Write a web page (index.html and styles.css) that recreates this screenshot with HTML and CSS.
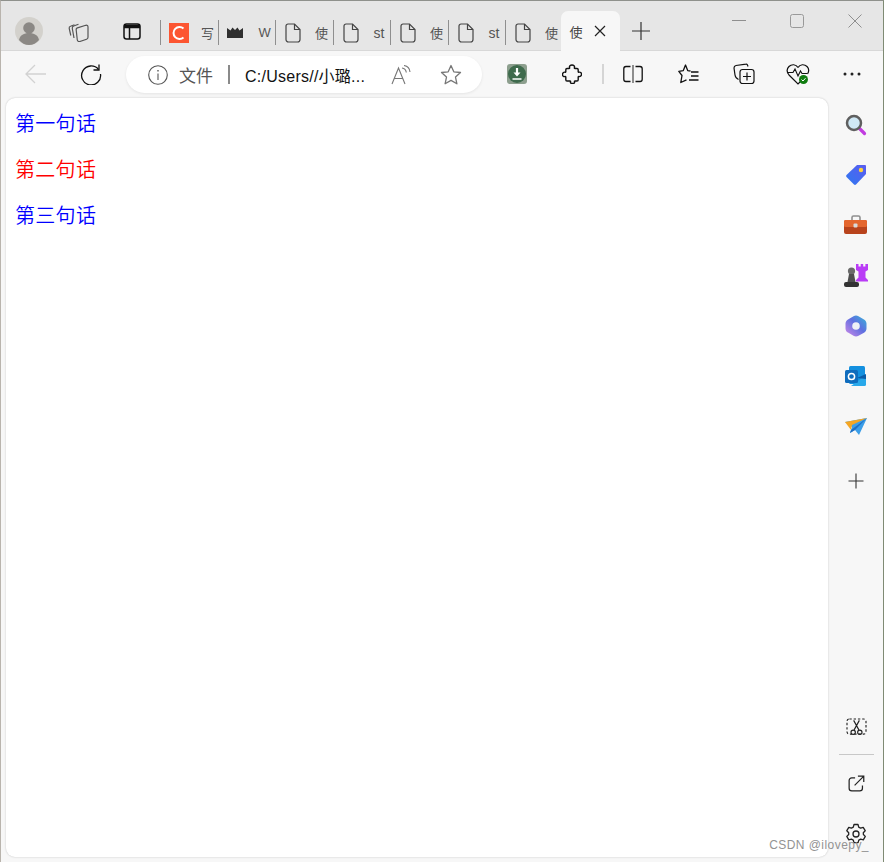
FILE: index.html
```html
<!DOCTYPE html>
<html lang="zh">
<head>
<meta charset="utf-8">
<title>使用</title>
<link rel="stylesheet" href="styles.css">
</head>
<body>
<div class="window">
  <header class="tabstrip">
    <div class="strip-left">
      <span class="profile">
        <svg width="28" height="28" viewBox="0 0 28 28"><circle cx="14" cy="14" r="14" fill="#d3d1cc"/><circle cx="14" cy="11" r="5.8" fill="#8b8884"/><path d="M4 23c1-5 5-7 10-7s9 2 10 7c-2.500 3-6 5-10 5s-7.500-2-10-5z" fill="#8b8884"/></svg>
      </span>
      <span class="strip-btn btn-collections">
        <svg width="22" height="22" viewBox="0 0 22 22" fill="none" stroke="#555" stroke-width="1.200"><path d="M2.800 15.500 1.200 8.500C1 7.300 1.500 6.500 2.500 6.200L6.500 4.700"/><path d="M6 18 4.300 8.500C4.100 7.200 4.700 6.300 5.700 6L10.500 4.300"/><path d="M8.200 10c-.2-1 .3-1.800 1.200-2.100l8.400-2.600c1.200-.3 2.200.4 2.200 1.600v10.300c0 1-.5 1.700-1.400 2l-6.800 2.300c-1.200.4-2.300-.3-2.500-1.500z"/></svg>
      </span>
      <span class="strip-btn btn-vtabs">
        <svg width="20" height="20" viewBox="0 0 20 20" fill="none" stroke="#111" stroke-width="1.500"><rect x="2" y="3" width="16" height="15" rx="2.500"/><path d="M2 5.500h16" stroke-width="3.500"/><path d="M7.500 6v12"/></svg>
      </span>
    </div>
    <div class="tabs">
      <div class="tab">
        <svg class="fav" width="20" height="20" viewBox="0 0 20 20"><rect width="20" height="20" fill="#fc5531"/><path d="M14.500 5.500A6 6 0 1 0 14.500 14.500" fill="none" stroke="#fff" stroke-width="2"/></svg>
        <span class="tab-title">写</span>
      </div>
      <div class="tab">
        <svg class="fav" width="16" height="11" viewBox="0 0 16 11"><path d="M0 1 3.500 3.500 5.500 0.500 8 3 10.500 0.500 12.500 3.500 16 1V11H0z" fill="#2f2f2f"/></svg>
        <span class="tab-title">W</span>
      </div>
      <div class="tab"><svg class="doc" width="16" height="20" viewBox="0 0 16 20" fill="none" stroke="#444" stroke-width="1.200"><path d="M3 1h6.500L15 6.500V16.500a2.500 2.500 0 0 1-2.500 2.500h-9A2.500 2.500 0 0 1 1 16.500V3a2 2 0 0 1 2-2z"/><path d="M9.500 1v5.500H15"/></svg><span class="tab-title">使</span></div>
      <div class="tab"><svg class="doc" width="16" height="20" viewBox="0 0 16 20" fill="none" stroke="#444" stroke-width="1.200"><path d="M3 1h6.500L15 6.500V16.500a2.500 2.500 0 0 1-2.500 2.500h-9A2.500 2.500 0 0 1 1 16.500V3a2 2 0 0 1 2-2z"/><path d="M9.500 1v5.500H15"/></svg><span class="tab-title latin">st</span></div>
      <div class="tab"><svg class="doc" width="16" height="20" viewBox="0 0 16 20" fill="none" stroke="#444" stroke-width="1.200"><path d="M3 1h6.500L15 6.500V16.500a2.500 2.500 0 0 1-2.500 2.500h-9A2.500 2.500 0 0 1 1 16.500V3a2 2 0 0 1 2-2z"/><path d="M9.500 1v5.500H15"/></svg><span class="tab-title">使</span></div>
      <div class="tab"><svg class="doc" width="16" height="20" viewBox="0 0 16 20" fill="none" stroke="#444" stroke-width="1.200"><path d="M3 1h6.500L15 6.500V16.500a2.500 2.500 0 0 1-2.500 2.500h-9A2.500 2.500 0 0 1 1 16.500V3a2 2 0 0 1 2-2z"/><path d="M9.500 1v5.500H15"/></svg><span class="tab-title latin">st</span></div>
      <div class="tab tab-last"><svg class="doc" width="16" height="20" viewBox="0 0 16 20" fill="none" stroke="#444" stroke-width="1.200"><path d="M3 1h6.500L15 6.500V16.500a2.500 2.500 0 0 1-2.500 2.500h-9A2.500 2.500 0 0 1 1 16.500V3a2 2 0 0 1 2-2z"/><path d="M9.500 1v5.500H15"/></svg><span class="tab-title">使</span></div>
      <div class="tab-active">
        <span class="tab-title">使</span>
        <svg width="12" height="12" viewBox="0 0 12 12" stroke="#222" stroke-width="1.200"><path d="M1 1 11 11M11 1 1 11"/></svg>
      </div>
      <span class="new-tab">
        <svg width="18" height="18" viewBox="0 0 18 18" stroke="#333" stroke-width="1.200"><path d="M9 0v18M0 9h18"/></svg>
      </span>
    </div>
    <div class="win-controls">
      <svg width="14" height="14" viewBox="0 0 14 14" stroke="#8f8f8f" stroke-width="1"><path d="M0 6.500h14"/></svg>
      <svg width="14" height="14" viewBox="0 0 14 14" fill="none" stroke="#999" stroke-width="1"><rect x=".5" y=".5" width="13" height="13" rx="2"/></svg>
      <svg width="14" height="14" viewBox="0 0 14 14" stroke="#8f8f8f" stroke-width="1"><path d="M.5.5l13 13M13.500.5l-13 13"/></svg>
    </div>
  </header>

  <nav class="toolbar">
    <span class="tb-back">
      <svg width="22" height="20" viewBox="0 0 22 20" fill="none" stroke="#d2d2d2" stroke-width="1.300"><path d="M21 10H1.500M10 1 1 10l9 9"/></svg>
    </span>
    <span class="tb-reload">
      <svg width="22" height="22" viewBox="0 0 22 22" fill="none" stroke="#111" stroke-width="1.300"><path d="M18.500 6.500A9.500 9.500 0 1 0 20.500 11"/><path d="M19 1.500V7h-5.500"/></svg>
    </span>
    <div class="omnibox">
      <svg class="info" width="20" height="20" viewBox="0 0 20 20" fill="none" stroke="#555" stroke-width="1.100"><circle cx="10" cy="10" r="9.300"/><path d="M10 8.500v6.500"/><path d="M10 5v1.500" stroke-width="1.400"/></svg>
      <span class="file-label">文件</span>
      <span class="omni-sep"></span>
      <span class="url">C:/Users//小璐...</span>
      <svg class="read" width="20" height="20" viewBox="0 0 20 20" fill="none" stroke="#777" stroke-width="1.100"><path d="M1 19 7.500 3 14 19M3.500 13.500h8"/><path d="M11 3c2.500.3 4 2 4.300 4.500M13 .5c3.300.5 5.700 3 6 6.500"/></svg>
      <svg class="star" width="22" height="22" viewBox="0 0 22 22" fill="none" stroke="#777" stroke-width="1.300"><path d="M11 1.500l2.800 6.300 6.700.7-5 4.600 1.400 6.700L11 16.400l-5.900 3.400 1.400-6.700-5-4.600 6.700-.7z" stroke-linejoin="round"/></svg>
    </div>
    <span class="ext-download">
      <svg width="20" height="20" viewBox="0 0 20 20"><rect width="20" height="20" rx="3" fill="#8d9f8e"/><circle cx="10" cy="10" r="9" fill="#3f6b4d"/><path d="M10 4v7" stroke="#fff" stroke-width="2.200"/><path d="M6.500 8.500 10 12.500l3.500-4z" fill="#fff"/><path d="M5.500 15h9" stroke="#fff" stroke-width="1.500"/></svg>
    </span>
    <span class="ext-puzzle">
      <svg width="20" height="20" viewBox="0 0 20 20" fill="none" stroke="#111" stroke-width="1.400" stroke-linejoin="round"><path d="M7.600 3.800C7 2.200 8.400 1 10 1s3 1.200 2.400 2.800c-.2.500.1.700.5.700H15a1.200 1.200 0 0 1 1.200 1.200v2c0 .4.300.7.800.5C18.300 7.700 19.500 9 19.500 10.300S18.300 13 17 12.500c-.5-.2-.8.100-.8.500v2.800A1.200 1.200 0 0 1 15 17h-2c-.4 0-.7.300-.5.800.5 1.200-.8 1.700-2 1.700s-2.500-.5-2-1.700c.2-.5-.1-.8-.5-.8H5a1.200 1.200 0 0 1-1.200-1.200V13c0-.4-.3-.7-.8-.5C1.700 13 .5 12 .5 10.500S1.700 7.800 3 8.200c.5.200.8-.1.800-.5V5.700A1.200 1.200 0 0 1 5 4.500h2.100c.4 0 .7-.2.500-.7z"/></svg>
    </span>
    <span class="tb-sep"></span>
    <span class="tb-split">
      <svg width="20" height="18" viewBox="0 0 20 18" fill="none" stroke="#111" stroke-width="1.300"><path d="M7.500 1.500H3A2.300 2.300 0 0 0 .8 3.800v10.400A2.300 2.300 0 0 0 3 16.500h4.500M12.500 1.500H17a2.300 2.300 0 0 1 2.200 2.300v10.400a2.300 2.300 0 0 1-2.200 2.300h-4.500"/><path d="M10 0v18" stroke="#555"/></svg>
    </span>
    <span class="tb-favs">
      <svg width="21" height="20" viewBox="0 0 21 20" fill="none" stroke="#111" stroke-width="1.300"><path d="M12.500 7 9.700 6.600 7.500 1 5.300 6.600 .8 7.400 4 11.500 2.800 18.500 8.500 15.800" stroke-linejoin="round"/><path d="M13 8h7.500M13 12h7.500M11 16h9.500"/></svg>
    </span>
    <span class="tb-coll">
      <svg width="22" height="22" viewBox="0 0 22 22" fill="none" stroke="#111" stroke-width="1.200"><path d="M15 3.500 14.500 2c-.2-.7-.9-1-1.600-.8L3 2.500C2 2.700 1 3.500 1 5l1 7c.2 1.500 1.300 3.500 3.500 4.500"/><rect x="7" y="6.500" width="14" height="14" rx="2.500"/><path d="M14 9.500v8M10 13.500h8"/></svg>
    </span>
    <span class="tb-health">
      <svg width="24" height="22" viewBox="0 0 24 22"><path d="M12 4.500C10 1 5.500 1 3 3.500 .5 6 1 9.500 3 12l9 9 3-3" fill="none" stroke="#111" stroke-width="1.200"/><path d="M12 4.500c2-3.500 6.500-3.500 9-1 2 2 2 5 .5 7.500" fill="none" stroke="#111" stroke-width="1.200"/><path d="M1.500 9.500H7L9 6l3 7 2.500-5 1.500 2.500h5" fill="none" stroke="#111" stroke-width="1.100"/><circle cx="17.500" cy="16.500" r="4.500" fill="#107c10"/><path d="M15.500 16.500l1.500 1.500 2.500-2.800" fill="none" stroke="#fff" stroke-width="1"/></svg>
    </span>
    <span class="tb-more">
      <svg width="18" height="4" viewBox="0 0 18 4" fill="#222"><circle cx="2" cy="2" r="1.500"/><circle cx="9" cy="2" r="1.500"/><circle cx="16" cy="2" r="1.500"/></svg>
    </span>
  </nav>

  <div class="body-row">
    <main class="page">
      <p class="line blue">第一句话</p>
      <p class="line red">第二句话</p>
      <p class="line blue">第三句话</p>
    </main>
    <aside class="sidebar">
      <div class="side-top">
        <span class="side-slot"><svg width="22" height="22" viewBox="0 0 22 22"><path d="M14.500 14.500l5 5" stroke="#c13ce0" stroke-width="3.200" stroke-linecap="round"/><circle cx="9" cy="9" r="7" fill="#cfe8f5" stroke="#5f5f5f" stroke-width="2.500"/></svg></span>
        <span class="side-slot"><svg width="22" height="22" viewBox="0 0 22 22"><defs><linearGradient id="tagfill" x1="0" y1="1" x2="1" y2="0"><stop offset="0" stop-color="#2f78f0"/><stop offset="1" stop-color="#5b5cf0"/></linearGradient></defs><path d="M12 1h8a1 1 0 0 1 1 1v8L11 20.500a1.500 1.500 0 0 1-2 0L1.500 13a1.500 1.500 0 0 1 0-2z" fill="url(#tagfill)"/><circle cx="16" cy="6" r="2.200" fill="#ffd23c"/></svg></span>
        <span class="side-slot"><svg width="24" height="20" viewBox="0 0 24 20"><path d="M8 5V2.500A1.500 1.500 0 0 1 9.500 1h5A1.500 1.500 0 0 1 16 2.500V5" fill="none" stroke="#8f8f8f" stroke-width="1.600"/><rect y="5" width="23" height="14" rx="2" fill="#b8431c"/><rect y="5" width="23" height="7" rx="1.500" fill="#e4662e"/><rect x="9.500" y="8.500" width="4" height="4" rx="1" fill="#d9d9d9"/></svg></span>
        <span class="side-slot"><svg width="24" height="24" viewBox="0 0 24 24"><path d="M12 0h2.500v2.500h2.200V0h2.500v2.500h2.200V0H24v6l-2.500 1.500v6L24 16v1.500H12V16l2.500-2.500v-6L12 6z" fill="#b93cf6"/><circle cx="7.500" cy="7" r="3.600" fill="#6a6a6a"/><path d="M5 10h5l1.500 8h-8z" fill="#4e4e4e"/><rect x="0" y="18" width="15" height="5" rx="2" fill="#333"/></svg></span>
        <span class="side-slot"><svg width="22" height="22" viewBox="0 0 22 22"><defs><linearGradient id="m365" x1="1" y1="0" x2="0" y2="1"><stop offset="0" stop-color="#37b6d8"/><stop offset=".45" stop-color="#5f6fe0"/><stop offset="1" stop-color="#d08ae8"/></linearGradient></defs><path d="M8.500 1.200c1.500-.9 3.500-.9 5 0l5.500 3.200c1.500.9 2.500 2.500 2.500 4.200v5c0 1.700-1 3.300-2.500 4.200l-5.500 3c-1.500.9-3.500.9-5 0L3 17.600C1.500 16.700.5 15.100.5 13.400V8.600C.5 6.900 1.500 5.300 3 4.400z" fill="url(#m365)"/><circle cx="11" cy="11" r="3.800" fill="#eef0f6"/></svg></span>
        <span class="side-slot"><svg width="22" height="22" viewBox="0 0 22 22"><rect x="4" y="1" width="16" height="18" rx="1.500" fill="#1490df"/><path d="M6 21 21 10v9.500a1.500 1.500 0 0 1-1.500 1.500z" fill="#28a8ea"/><path d="M12 13l9-4v5z" fill="#0a5ca8"/><rect y="5" width="13" height="13" rx="1.500" fill="#0f6cbd"/><circle cx="6.500" cy="11.500" r="3.100" fill="none" stroke="#fff" stroke-width="1.500"/></svg></span>
        <span class="side-slot"><svg width="22" height="17" viewBox="0 0 22 17"><path d="M0 4 22 0 14 17 10 12 5 15 7 9z" fill="#3b9ee8"/><path d="M0 4l22-4L7 7 6 12z" fill="#f5a623"/><path d="M6 12 22 0 10 12 5 15z" fill="#1e6fc4"/></svg></span>
        <span class="side-slot side-plus"><svg width="16" height="16" viewBox="0 0 16 16" stroke="#333" stroke-width="1.100"><path d="M8 .5v15M.5 8h15"/></svg></span>
      </div>
      <div class="side-bottom">
        <svg width="21" height="19" viewBox="0 0 22 20" fill="none" stroke="#222" stroke-width="1.200"><rect x="1" y="1" width="20" height="16" rx="2.500" stroke-dasharray="2.500 2"/><path d="M8 2.500l5.500 10M14 2.500l-5.500 10"/><circle cx="7.500" cy="15" r="2.300"/><circle cx="14.500" cy="15" r="2.300"/></svg>
        <span class="side-rule"></span>
        <svg class="side-open" width="17" height="17" viewBox="0 0 18 18" fill="none" stroke="#222" stroke-width="1.300"><path d="M7.500 3H4A2.800 2.800 0 0 0 1.200 5.800V14A2.800 2.800 0 0 0 4 16.800h8.500a2.800 2.800 0 0 0 2.800-2.800v-3"/><path d="M7 11 16.500 1.500M10.500 1.200h6.200v6.200"/></svg>
        <svg class="side-gear" width="22" height="22" viewBox="0 0 22 22" fill="none" stroke="#222" stroke-width="1.300" stroke-linejoin="round"><circle cx="11" cy="11" r="3"/><path d="M9 1.500h4l.7 2.600 1.900 1 2.600-.8 2 3.400-1.900 2 .1 1.800 1.900 1.900-2 3.400-2.600-.7-1.900 1-.7 2.500H9l-.7-2.500-1.900-1-2.600.7-2-3.400 1.900-1.900v-1.800l-1.900-2 2-3.400 2.600.8 1.900-1z"/></svg>
      </div>
    </aside>
  </div>
  <span class="watermark">CSDN @ilovepy_</span>
</div>
</body>
</html>
```

FILE: styles.css
```css
* { box-sizing: border-box; }
html, body { margin: 0; padding: 0; height: 100%; }
body { font-family: "Liberation Sans", "Noto Sans CJK SC", sans-serif; overflow: hidden; }
svg { display: block; flex: none; }

.window {
  position: relative;
  width: 884px;
  height: 862px;
  display: flex;
  flex-direction: column;
  background: #f7f7f7;
  border-top: 1px solid #8f918c;
  border-left: 1px solid #b9b4ad;
  border-right: 1px solid #7f8b74;
}

.tabstrip {
  height: 50px;
  flex: none;
  display: flex;
  background: #e6e6e6;
  border-bottom: 1px solid #d8d8d8;
}
.strip-left { display: flex; align-items: flex-start; width: 159px; flex: none; padding-left: 14px; padding-top: 16px; }
.profile { width: 28px; }
.strip-btn { display: block; }
.btn-collections { margin-left: 25px; margin-top: 3px; }
.btn-vtabs { margin-left: 32px; margin-top: 4px; }

.tabs { display: flex; align-items: flex-start; width: 519px; flex: none; padding-top: 10px; }
.tab {
  width: 57.5px;
  flex: none;
  margin-top: 9px;
  height: 25px;
  display: flex;
  align-items: center;
  border-left: 1px solid #8f8f8f;
  padding-left: 9px;
}
.tab:nth-child(1) { padding-left: 8px; }
.tab:nth-child(2) { padding-left: 8px; }
.tab .doc { margin-right: 14px; }
.tab:nth-child(even) .doc { margin-right: 15px; }
.tab .fav { margin-right: 12px; }
.tab:nth-child(2) .fav { margin-right: 16px; }
.tab-title { font-size: 13px; color: #555; white-space: nowrap; flex: none; }
.tab-title.latin { font-size: 14px; }
.tab-active {
  width: 59px;
  height: 40px;
  flex: none;
  margin-left: -2px;
  display: flex;
  align-items: center;
  gap: 11px;
  padding-left: 9px;
  background: #f7f7f7;
  border-radius: 7px 7px 0 0;
}
.tab-active .tab-title { color: #444; }
.new-tab { margin-left: 12px; margin-top: 11px; }

.win-controls { display: flex; align-items: flex-start; padding-top: 13px; gap: 44px; margin-left: 53px; }

.toolbar {
  height: 47px;
  flex: none;
  display: flex;
  align-items: center;
  padding-bottom: 1px;
  background: #f7f7f7;
}
.tb-back { margin-left: 24px; }
.tb-reload { margin-left: 33px; }
.omnibox {
  margin-left: 24px;
  margin-top: 1px;
  width: 356px;
  height: 37px;
  flex: none;
  display: flex;
  align-items: center;
  background: #fff;
  border-radius: 19px;
  padding-left: 22px;
  box-shadow: 0 1px 3px rgba(0,0,0,.08);
}
.file-label { font-size: 17px; color: #555; margin-left: 11px; font-family: "Noto Sans CJK SC", sans-serif; }
.omni-sep { width: 2px; height: 19px; background: #8a8a8a; margin-left: 15px; }
.url { font-size: 16px; letter-spacing: .25px; color: #111; margin-left: 15px; width: 131px; white-space: nowrap; }
.read { margin-left: 15px; }
.star { margin-left: 29px; }
.ext-download { margin-left: 25px; }
.ext-puzzle { margin-left: 35px; }
.tb-sep { width: 2px; height: 20px; background: #d5d5d5; margin-left: 20px; }
.tb-split { margin-left: 19px; }
.tb-favs { margin-left: 35px; }
.tb-coll { margin-left: 34px; }
.tb-health { margin-left: 31px; }
.tb-more { margin-left: 33px; }

.body-row { flex: 1; display: flex; min-height: 0; }
.page {
  margin-left: 5px;
  margin-bottom: 5px;
  width: 822px;
  flex: none;
  background: #fff;
  border-radius: 9px;
  box-shadow: 0 0 2px rgba(0,0,0,.22);
  padding: 12px 9px;
}
.line {
  margin: 0 0 20px;
  font-size: 20px;
  line-height: 26px;
  letter-spacing: .3px;
  font-family: "Noto Sans CJK SC", sans-serif;
  font-weight: 350;
}
.blue { color: #0000ff; }
.red { color: #ff0000; }

.sidebar {
  flex: 1;
  display: flex;
  flex-direction: column;
  justify-content: space-between;
  align-items: center;
  padding: 2px 0 17px 1px;
}
.side-top { display: flex; flex-direction: column; align-items: center; }
.side-slot { height: 50.2px; display: flex; align-items: center; justify-content: center; }
.side-plus { margin-top: 5px; }
.side-bottom { display: flex; flex-direction: column; align-items: center; }
.side-rule { width: 35px; height: 1px; background: #c8c8c8; margin: 17px 0 20px; }
.side-gear { margin-top: 31px; }

.watermark {
  position: absolute;
  right: 14px;
  bottom: 10px;
  font-size: 12px;
  color: #939393;
  letter-spacing: .45px;
  font-family: "Liberation Sans", sans-serif;
}
```
